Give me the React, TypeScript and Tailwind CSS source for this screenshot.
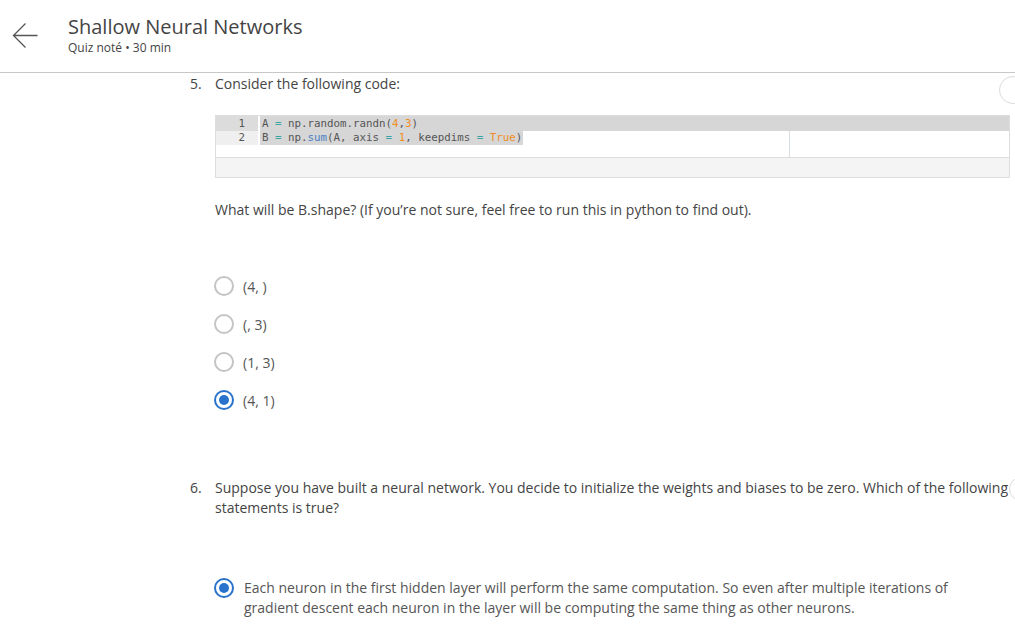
import React from "react";

const Radio = ({ checked = false }: { checked?: boolean }) =>
  checked ? (
    <span className="flex h-[20px] w-[20px] shrink-0 items-center justify-center rounded-full border-2 border-[#2a73cc]">
      <span className="h-[10px] w-[10px] rounded-full bg-[#2a73cc]" />
    </span>
  ) : (
    <span className="h-[20px] w-[20px] shrink-0 rounded-full border-2 border-[#c4c4c4]" />
  );

const options = ["(4, )", "(, 3)", "(1, 3)", "(4, 1)"];

export default function App() {
  return (
    <div className="relative h-[629px] w-[1015px] overflow-hidden bg-white font-['Open_Sans',sans-serif] text-[#444]">
      <header className="flex h-[73px] border-b border-[#c8c8c8]">
        <div className="w-[68px] pl-[12px] pt-[22px]">
          <svg width="26" height="27" viewBox="0 0 26 27" fill="none">
            <path
              d="M25.5 13.5H1.5M13.5 1.5L1.5 13.5L13.5 25.5"
              stroke="#555"
              strokeWidth="1.3"
            />
          </svg>
        </div>
        <div className="pt-[13px]">
          <div className="text-[20px] leading-[27px] text-[#444]">Shallow Neural Networks</div>
          <div className="text-[12px] leading-[16px] text-[#444]">Quiz noté • 30 min</div>
        </div>
      </header>

      <main className="pl-[190px] pt-[1px]">
        {/* question 5 */}
        <section className="relative flex">
          <div className="w-[25px] text-[14px] leading-[20px]">5.</div>
          <div className="w-[795px]">
            <p className="text-[14px] leading-[20px]">Consider the following code:</p>

            <div className="mt-[21px] border border-[#dddddd] font-['DejaVu_Sans_Mono',monospace] text-[10.8px] text-[#555]">
              <div className="relative flex h-[41px]">
                <div className="flex w-[42px] flex-col text-right">
                  <div className="h-[15px] bg-[#dcdcdc] pr-[13px] leading-[15px]">1</div>
                  <div className="h-[14px] bg-[#efefef] pr-[13px] leading-[14px]">2</div>
                </div>
                <div className="flex flex-1 flex-col pl-[2px]">
                  <div className="h-[15px] whitespace-pre bg-[#d6d6d6] pl-[2px] leading-[15px]">
                    A <span className="text-[#3aa3a3]">=</span> np.random.randn(
                    <span className="text-[#ef8d22]">4</span>,<span className="text-[#ef8d22]">3</span>)
                  </div>
                  <div className="flex h-[14px] leading-[14px]">
                    <span className="whitespace-pre bg-[#d6d6d6] pl-[2px] pr-[1px]">
                      B <span className="text-[#3aa3a3]">=</span> np.
                      <span className="text-[#4a80c4]">sum</span>(A, axis{" "}
                      <span className="text-[#3aa3a3]">=</span> <span className="text-[#ef8d22]">1</span>, keepdims{" "}
                      <span className="text-[#3aa3a3]">=</span> <span className="text-[#ef8d22]">True</span>)
                    </span>
                  </div>
                </div>
                <div className="absolute bottom-0 left-[573px] top-[15px] w-px bg-[#d5dde5]" />
              </div>
              <div className="h-[20px] border-t border-[#dddddd] bg-[#f4f4f4]" />
            </div>

            <p className="mt-[22px] text-[14px] leading-[20px]">
              What will be B.shape? (If you’re not sure, feel free to run this in python to find out).
            </p>

            <ul className="mt-[56px] flex flex-col gap-[18px]">
              {options.map((o, i) => (
                <li key={i} className="-ml-[1px] flex h-[20px] items-center gap-[9px] text-[14px] text-[#555]">
                  <Radio checked={i === 3} />
                  <span>{o}</span>
                </li>
              ))}
            </ul>
          </div>
          <div className="absolute left-[809px] top-[2px] h-[28px] w-[28px] rounded-full border border-[#dcdcdc]" />
        </section>

        {/* question 6 */}
        <section className="relative mt-[68px] flex">
          <div className="w-[25px] text-[14px] leading-[20px]">6.</div>
          <div className="w-[800px]">
            <p className="text-[14px] leading-[20px]">
              Suppose you have built a neural network. You decide to initialize the weights and biases to be zero. Which of the following statements is true?
            </p>
            <div className="mt-[60px] -ml-[1px] flex gap-[10px]">
              <Radio checked />
              <p className="w-[740px] text-[14px] leading-[20px] text-[#555]">
                Each neuron in the first hidden layer will perform the same computation. So even after multiple iterations of gradient descent each neuron in the layer will be computing the same thing as other neurons.
              </p>
            </div>
          </div>
          <div className="absolute left-[819px] top-[-1px] h-[24px] w-[24px] rounded-full border border-[#dcdcdc] bg-white" />
        </section>
      </main>
    </div>
  );
}
